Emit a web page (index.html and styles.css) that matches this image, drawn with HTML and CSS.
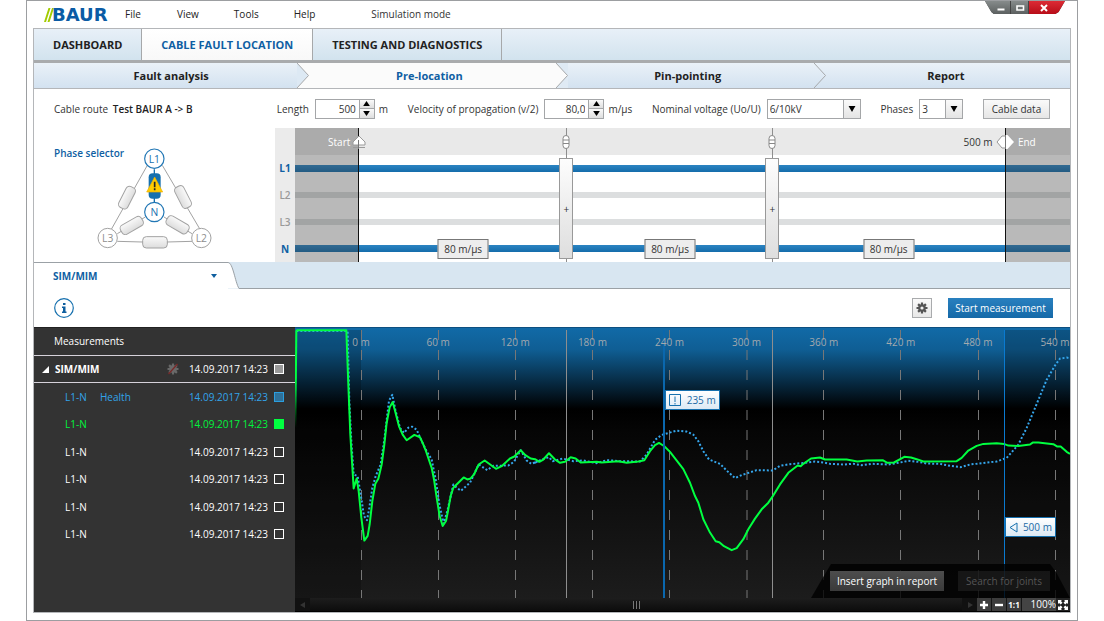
FILE: index.html
```html
<!DOCTYPE html>
<html lang="en">
<head>
<meta charset="utf-8">
<title>BAUR – Cable fault location</title>
<link rel="stylesheet" href="styles.css">
</head>
<body>
<div class="window">
  <header class="titlebar">
    <div class="logo">
      <svg class="logo-stripes" viewBox="0 0 10 14" aria-hidden="true">
        <path d="M0 14 4.500 0h2L2 14zM3.500 14 8 0h2L5.500 14z" fill="#a3cc00"/>
      </svg>
      <span class="logo-name">BAUR</span>
    </div>
    <nav class="menu">
      <button class="menu-item">File</button>
      <button class="menu-item">View</button>
      <button class="menu-item">Tools</button>
      <button class="menu-item">Help</button>
    </nav>
    <span class="mode">Simulation mode</span>
    <div class="window-buttons">
      <button class="win-btn win-min" aria-label="Minimize"><svg viewBox="0 0 10 10"><path d="M1.500 5.500h7v2h-7z" fill="#fff"/></svg></button>
      <button class="win-btn" aria-label="Maximize"><svg viewBox="0 0 10 10"><path d="M2 3h6.500v4H2z" fill="none" stroke="#fff" stroke-width="1.600"/></svg></button>
      <button class="win-btn win-close" aria-label="Close"><svg viewBox="0 0 10 10"><path d="m2 2 6 6M8 2 2 8" stroke="#fff" stroke-width="2"/></svg></button>
    </div>
  </header>

  <main class="frame">
    <nav class="tabs">
      <button class="tab">DASHBOARD</button>
      <button class="tab tab-active">CABLE FAULT LOCATION</button>
      <button class="tab">TESTING AND DIAGNOSTICS</button>
    </nav>

    <nav class="steps">
      <button class="step">Fault analysis
        <svg class="step-arrow" viewBox="0 0 12 25"><path d="M0 0h12v25H0z" fill="#fbfbfb"/><path d="m0 0 11.500 12.500L0 25z" fill="#dde9f4"/><path d="m0 0 11.500 12.500L0 25" fill="none" stroke="#a6a8aa"/></svg>
      </button>
      <button class="step step-active">Pre-location
        <svg class="step-arrow" viewBox="0 0 12 25"><path d="M0 0h12v25H0z" fill="#dfeaf4"/><path d="m0 0 11.500 12.500L0 25z" fill="#fbfbfb"/><path d="m0 0 11.500 12.500L0 25" fill="none" stroke="#a6a8aa"/></svg>
      </button>
      <button class="step">Pin-pointing
        <svg class="step-arrow" viewBox="0 0 12 25"><path d="m0 0 11.500 12.500L0 25" fill="none" stroke="#a6a8aa"/></svg>
      </button>
      <button class="step">Report</button>
    </nav>

    <form class="params">
      <span class="route">Cable route <b class="route-name">Test BAUR A -&gt; B</b></span>
      <div class="field">
        <label for="length">Length</label>
        <span class="spin">
          <input id="length" class="spin-input" type="text" value="500">
          <span class="spin-buttons">
            <button type="button" class="spin-btn" aria-label="Increase length"><svg viewBox="0 0 8 6"><path d="M4 0 8 6H0z"/></svg></button>
            <button type="button" class="spin-btn" aria-label="Decrease length"><svg viewBox="0 0 8 6"><path d="M4 6 8 0H0z"/></svg></button>
          </span>
        </span>
        <span class="unit">m</span>
      </div>
      <div class="field">
        <label for="velocity">Velocity of propagation (v/2)</label>
        <span class="spin">
          <input id="velocity" class="spin-input" type="text" value="80,0">
          <span class="spin-buttons">
            <button type="button" class="spin-btn" aria-label="Increase velocity"><svg viewBox="0 0 8 6"><path d="M4 0 8 6H0z"/></svg></button>
            <button type="button" class="spin-btn" aria-label="Decrease velocity"><svg viewBox="0 0 8 6"><path d="M4 6 8 0H0z"/></svg></button>
          </span>
        </span>
        <span class="unit">m/µs</span>
      </div>
      <div class="field">
        <label for="voltage">Nominal voltage (Uo/U)</label>
        <span class="combo combo-wide">
          <select id="voltage" class="combo-select"><option>6/10kV</option></select>
          <span class="combo-arrow"><svg viewBox="0 0 8 7"><path d="M4 7 8 0H0z"/></svg></span>
        </span>
      </div>
      <div class="field">
        <label for="phases">Phases</label>
        <span class="combo combo-narrow">
          <select id="phases" class="combo-select"><option>3</option></select>
          <span class="combo-arrow"><svg viewBox="0 0 8 7"><path d="M4 7 8 0H0z"/></svg></span>
        </span>
      </div>
      <button type="button" class="data-btn">Cable data</button>
    </form>

    <section class="overview">
      <div class="selector">
        <h2 class="selector-title">Phase selector</h2>
        <svg class="selector-graph" viewBox="225 78 360 312" role="img" aria-label="Phase triangle">
          <defs>
            <linearGradient id="pill" x1="0" y1="0" x2="0" y2="1"><stop offset="0" stop-color="#fafafa"/><stop offset="1" stop-color="#dcdcdc"/></linearGradient>
          </defs>
          <g fill="none" stroke="#a2a2a2" stroke-width="3">
            <path d="M382 136 274 328M427 136 540 328M292 364l112 3 112-3M376 291l-84 50M432 291l84 50"/>
            <g fill="url(#pill)">
              <rect x="286" y="218" width="70" height="30" rx="11" transform="rotate(-63 321 233)"/>
              <rect x="454" y="216" width="70" height="30" rx="11" transform="rotate(63 489 231)"/>
              <rect x="299" y="301" width="72" height="31" rx="11" transform="rotate(-30 335 316)"/>
              <rect x="437" y="299" width="72" height="31" rx="11" transform="rotate(30 473 314)"/>
              <rect x="368" y="350" width="74" height="34" rx="11"/>
            </g>
            <circle cx="263" cy="354" r="29" fill="#fff"/>
            <circle cx="544" cy="354" r="29" fill="#fff"/>
          </g>
          <path d="M403 148v100" stroke="#1670ae" stroke-width="4"/>
          <rect x="386" y="160" width="36" height="76" rx="12" fill="#1670ae"/>
          <path d="m404 171 24 45h-48z" fill="#fc0" stroke="#f0b000" stroke-width="2"/>
          <path d="M404 185v17M404 205v6" stroke="#222" stroke-width="5"/>
          <g fill="#fff" stroke="#2277b5" stroke-width="3.500">
            <circle cx="403" cy="116" r="29"/><circle cx="403" cy="276" r="29"/>
          </g>
          <g class="node-text">
            <text x="403" y="128" fill="#1670ae">L1</text>
            <text x="403" y="288" fill="#1670ae">N</text>
            <text x="263" y="366" fill="#8e8e8e">L3</text>
            <text x="544" y="366" fill="#8e8e8e">L2</text>
          </g>
        </svg>
      </div>

      <div class="cable">
        <ul class="cable-labels">
          <li class="on">L1</li><li>L2</li><li>L3</li><li class="on">N</li>
        </ul>
        <div class="cable-area">
          <div class="cable-head"></div>
          <div class="lane"><i class="wire wire-on"></i></div>
          <div class="lane"><i class="wire"></i></div>
          <div class="lane"><i class="wire"></i></div>
          <div class="lane"><i class="wire wire-on"></i></div>

          <div class="outside outside-start"><span class="outside-text">Start</span></div>
          <div class="outside outside-end"><span class="outside-text">End</span></div>
          <svg class="pin pin-start" viewBox="0 0 14 14"><path d="M7 1 1 7v3h12V7zM1 12.500h12" fill="#fff" stroke="#9a9a9a"/><path d="M6.500 5v9" stroke="#777"/></svg>
          <span class="end-length">500 m</span>
          <svg class="pin pin-end" viewBox="0 0 18 14"><path d="M9 1H6L1 7l5 6h3" fill="#fff" stroke="#999"/><path d="M9.500 0h2L18 7l-6.500 7h-2z" fill="#fff"/><path d="M9.500 0v14" stroke="#777"/></svg>

          <div class="joint joint-a">
            <svg class="joint-icon" viewBox="0 0 8 14"><rect x="1" y=".5" width="6" height="13" rx="3" fill="#fff" stroke="#888"/><path d="M1 5h6M1 8.500h6" stroke="#888"/></svg>
            <span class="joint-bar">+</span>
          </div>
          <div class="joint joint-b">
            <svg class="joint-icon" viewBox="0 0 8 14"><rect x="1" y=".5" width="6" height="13" rx="3" fill="#fff" stroke="#888"/><path d="M1 5h6M1 8.500h6" stroke="#888"/></svg>
            <span class="joint-bar">+</span>
          </div>
          <span class="speed speed-a">80 m/µs</span>
          <span class="speed speed-b">80 m/µs</span>
          <span class="speed speed-c">80 m/µs</span>
        </div>
      </div>
    </section>

    <div class="method-bar">
      <div class="method">
        <select class="method-select" aria-label="Measurement method"><option>SIM/MIM</option></select>
        <svg class="method-caret" viewBox="0 0 6 4"><path d="M0 0h6L3 4z" fill="#0f5f9f"/></svg>
      </div>
      <svg class="method-edge" viewBox="0 0 12 27"><path d="M0 .5C5 .5 7 20 11 26.500H0z" fill="#fff"/><path d="M0 .5C5 .5 7 20 11 26.500h1" fill="none" stroke="#9ba1a6"/></svg>
      <div class="method-rest"></div>
    </div>

    <div class="actions">
      <button class="info" aria-label="Information"><svg viewBox="0 0 20 20"><circle cx="10" cy="10" r="9.300" fill="#fff" stroke="#1670ae" stroke-width="1.200"/><path d="M9 5h2.500v2H9zM8 8.500h3.500v5h1V15H8v-1.500h1V10H8z" fill="#0f5f9f"/></svg></button>
      <button class="gear" aria-label="Settings">
        <svg viewBox="0 0 12 12"><g stroke="#555" stroke-width="2.200"><path d="M6 .5v11M.5 6h11M2.100 2.100l7.800 7.800M9.900 2.100 2.100 9.900"/></g><circle cx="6" cy="6" r="3.800" fill="#555"/><circle cx="6" cy="6" r="1.600" fill="#f0f0f0"/></svg>
      </button>
      <button class="start">Start measurement</button>
    </div>

    <section class="results">
      <aside class="list">
        <h2 class="list-title">Measurements</h2>
        <div class="group">
          <svg class="group-toggle" viewBox="0 0 7 7"><path d="M7 0v7H0z" fill="#fff"/></svg>
          <b class="group-name">SIM/MIM</b>
          <svg class="group-gear" viewBox="0 0 12 12"><g stroke="#777" stroke-width="2.200"><path d="M6 .5v11M.5 6h11M2.100 2.100l7.800 7.800M9.900 2.100 2.100 9.900"/></g><circle cx="6" cy="6" r="3.800" fill="#777"/><path d="M10.500 1 1.500 11" stroke="#8a2626" stroke-width="1.300"/></svg>
          <label class="date" for="m0">14.09.2017 14:23</label>
          <input id="m0" class="mark mark-mixed" type="checkbox">
        </div>
        <ul class="rows">
          <li class="row row-blue"><span>L1-N</span><span>Health</span><label class="date" for="m1">14.09.2017 14:23</label><input id="m1" class="mark mark-blue" type="checkbox" checked></li>
          <li class="row row-green"><span>L1-N</span><span></span><label class="date" for="m2">14.09.2017 14:23</label><input id="m2" class="mark mark-green" type="checkbox" checked></li>
          <li class="row"><span>L1-N</span><span></span><label class="date" for="m3">14.09.2017 14:23</label><input id="m3" class="mark" type="checkbox"></li>
          <li class="row"><span>L1-N</span><span></span><label class="date" for="m4">14.09.2017 14:23</label><input id="m4" class="mark" type="checkbox"></li>
          <li class="row"><span>L1-N</span><span></span><label class="date" for="m5">14.09.2017 14:23</label><input id="m5" class="mark" type="checkbox"></li>
          <li class="row"><span>L1-N</span><span></span><label class="date" for="m6">14.09.2017 14:23</label><input id="m6" class="mark" type="checkbox"></li>
        </ul>
      </aside>

      <div class="graph">
        <div class="plot">
          <svg class="curves" viewBox="0 0 775 271" preserveAspectRatio="none" role="img" aria-label="Pulse reflection over distance">
            <defs>
              <linearGradient id="rise" gradientUnits="userSpaceOnUse" x1="0" y1="16" x2="0" y2="310"><stop offset="0" stop-color="#00ff40"/><stop offset=".5" stop-color="#00ff40"/><stop offset="1" stop-color="#00ff40" stop-opacity="0"/></linearGradient>
            </defs>
            <path d="M0 2h66v269H0zM710 2h65v269h-65z" fill="#000" fill-opacity=".2"/>
            <path class="grid" d="M66.500 2v269M143.500 2v269M220.500 2v269M297.500 2v269M374.500 2v269M452 2v269M528.500 2v269M605.500 2v269M683.500 2v269M760.500 2v269"/>
            <path class="joint-line" d="M271.500 2v269M477.500 2v269"/>
            <g transform="translate(-5 -3) scale(.33333)">
              <polyline class="curve curve-health" points="19,18 173,18 178,230 184,350 191,450 203,455 212,510 222,575 231,588 238,550 247,490 257,455 272,420 283,345 297,228 307,210 316,255 330,310 342,325 355,309 366,306 380,315 395,350 410,380 425,405 438,470 448,540 461,598 472,560 490,480 500,490 513,499 540,475 552,450 566,420 592,437 610,424 655,423 672,412 692,377 710,408 724,418 745,410 732,416 755,405 777,398 788,410 818,402 850,410 880,408 900,412 920,416 950,407 970,408 985,410 1050,411 1070,390 1095,346 1115,331 1160,318 1190,321 1210,330 1225,350 1240,380 1257,405 1290,418 1312,440 1335,461 1355,452 1400,437 1448,438 1470,424 1500,419 1535,416 1575,411 1600,414 1620,418 1660,420 1690,418 1715,422 1745,418 1795,420 1830,414 1855,409 1885,412 1910,417 1950,418 1980,424 2013,428 2040,420 2120,411 2150,400 2185,360 2210,310 2235,250 2270,165 2295,122 2310,101 2330,98 2340,100"/>
              <polyline class="curve curve-rise" points="16,310 19,16"/>
              <polyline class="curve curve-fault" points="19,16 169,16 175,180 181,330 191,492 200,462 206,500 214,580 223,649 233,635 239,600 247,530 256,478 265,463 275,420 283,360 290,295 299,248 308,232 316,262 327,305 338,330 350,347 373,331 390,338 398,355 408,380 425,430 432,465 440,520 449,575 458,605 468,590 474,560 482,515 490,490 521,459 532,465 542,462 552,450 566,420 584,408 618,433 635,425 660,402 673,396 692,377 706,392 722,402 735,404 748,412 760,405 777,386 795,405 810,415 825,412 842,398 857,402 872,414 920,412 935,414 985,410 1010,415 1045,411 1063,407 1080,380 1095,362 1107,355 1123,365 1140,382 1180,434 1200,475 1215,515 1225,535 1240,585 1260,625 1277,651 1288,654 1302,666 1325,678 1340,672 1360,645 1375,615 1395,583 1415,555 1435,535 1448,516 1470,480 1495,445 1523,423 1532,425 1540,418 1563,402 1590,399 1605,405 1670,405 1702,411 1730,408 1778,407 1792,415 1812,414 1843,397 1863,399 1880,404 1900,411 2000,410 2015,400 2035,378 2060,364 2080,358 2120,356 2142,358 2155,363 2185,364 2220,360 2228,354 2245,354 2290,359 2302,366 2312,366 2330,382 2340,388"/>
            </g>
            <path class="cursor" d="M369 2v269"/>
            <path class="cursor cursor-thin" d="M709.500 2v269"/>
          </svg>
          <ol class="scale">
            <li>0 m</li><li>60 m</li><li>120 m</li><li>180 m</li><li>240 m</li><li>300 m</li><li>360 m</li><li>420 m</li><li>480 m</li><li>540 m</li>
          </ol>
          <div class="flag flag-fault"><svg class="flag-icon" viewBox="0 0 12 12"><path d="M.5.5h11v11H.5z" fill="none" stroke="#1670ae"/><path d="M6 2.500V8M6 9v1.500" stroke="#1670ae"/></svg>235 m</div>
          <div class="flag flag-end"><svg class="flag-arrow" viewBox="0 0 9 11"><path d="M8 1v9L1 5.500z" fill="none" stroke="#1670ae"/></svg>500 m</div>
          <div class="dock">
            <button class="dock-btn">Insert graph in report</button>
            <button class="dock-btn dock-off" disabled>Search for joints</button>
          </div>
        </div>
        <div class="scrollbar">
          <button class="scroll-btn" aria-label="Scroll left"><svg viewBox="0 0 6 6"><path d="M5 0v6L0 3z" fill="#333"/></svg></button>
          <div class="track"><i class="grip"></i></div>
          <button class="scroll-btn" aria-label="Scroll right"><svg viewBox="0 0 6 6"><path d="M1 0v6l5-3z" fill="#333"/></svg></button>
          <button class="zoom-btn" aria-label="Zoom in"><svg viewBox="0 0 8 8"><path d="M4 0v8M0 4h8" stroke="#fff" stroke-width="2.400"/></svg></button>
          <button class="zoom-btn" aria-label="Zoom out"><svg viewBox="0 0 8 8"><path d="M0 4h8" stroke="#fff" stroke-width="2.400"/></svg></button>
          <button class="zoom-btn zoom-one">1:1</button>
          <span class="zoom-value">100%</span>
          <button class="zoom-fit" aria-label="Fit to window"><svg viewBox="0 0 10 10"><path d="M0 0h4L2.900 1.100l1.600 1.600-1.800 1.800-1.600-1.600L0 4zM10 0v4L8.900 2.900 7.300 4.500 5.500 2.700l1.600-1.600L6 0zM0 10V6l1.100 1.100 1.600-1.600 1.800 1.800-1.600 1.600L4 10zM10 10H6l1.100-1.100-1.600-1.600 1.800-1.800 1.600 1.600L10 6z" fill="#fff"/></svg></button>
        </div>
      </div>
    </section>
  </main>
</div>
</body>
</html>
```

FILE: styles.css
```css
* { box-sizing: border-box; }

body {
  margin: 0;
  background: #fff;
  color: #333;
  font: 10px/14px "Open Sans", "Noto Sans", sans-serif;
}

button, input, select {
  margin: 0;
  padding: 0;
  border: 0;
  border-radius: 0;
  background: none;
  color: inherit;
  font: inherit;
}

svg { display: block; }
ul, ol { margin: 0; padding: 0; list-style: none; }
h2 { margin: 0; font-size: inherit; }

.window {
  display: flex;
  flex-direction: column;
  min-height: 100vh;
  margin: 0 26px;
  padding: 0 6px 7px;
  border: 1px solid #9c9ea1;
}

/* Title bar */
.titlebar {
  display: flex;
  align-items: flex-start;
  height: 27px;
  padding: 0 6px 0 11px;
}
.logo { display: flex; align-items: center; width: 80px; height: 27px; }
.logo-stripes { flex: none; width: 10px; height: 14px; margin-right: -2px; }
.logo-name { color: #0a5ba5; font: bold 18px/27px "DejaVu Sans", sans-serif; }
.menu { display: flex; gap: 35px; line-height: 27px; color: #222; }
.menu-item { min-width: 18px; }
.mode { margin-left: 56px; line-height: 27px; }
.window-buttons {
  display: flex;
  gap: 1px;
  width: 80px;
  height: 13px;
  margin-left: auto;
  background: #444;
  clip-path: polygon(0 0, 100% 0, 92% 85%, 88% 100%, 11% 100%, 8% 85%);
}
.win-btn {
  display: flex;
  align-items: center;
  justify-content: center;
  width: 17px;
  background: linear-gradient(#868b8b, #5c6060);
}
.win-btn svg { width: 10px; height: 10px; }
.win-min { width: 25px; padding-left: 6px; }
.win-close { width: 36px; padding-right: 6px; background: linear-gradient(#dc2b35, #b80d18); }

.frame {
  display: flex;
  flex: 1;
  flex-direction: column;
  overflow: hidden;
  border: 1px solid #b4b6b9;
}

/* Main tabs */
.tabs {
  display: flex;
  height: 34px;
  border-bottom: 3px solid #a9abad;
  background: linear-gradient(#e8f0f8, #d2e3ee);
}
.tab {
  padding: 0 19px;
  border-right: 1px solid #a6a8aa;
  color: #222;
  font-size: 11px;
  font-weight: bold;
}
.tab-active { background: linear-gradient(#fff, #f8f8f8); color: #0f5fa3; }

/* Workflow steps */
.steps {
  display: grid;
  grid-template-columns: repeat(4, 1fr);
  height: 26px;
  margin-right: -5px;
  padding-left: 8px;
  overflow: hidden;
  border-bottom: 1px solid #b4b6b9;
  background: linear-gradient(#eaf1f8, #d3e2f0);
}
.step { position: relative; color: #222; font-size: 11px; font-weight: bold; }
.step-active { background: #fbfbfb; color: #0f5fa3; }
.step-arrow { position: absolute; z-index: 1; top: 0; right: -9px; width: 12px; height: 25px; }

/* Cable parameters */
.params {
  display: flex;
  align-items: center;
  justify-content: space-between;
  height: 39px;
  padding: 0 20px;
}
.route { width: 203px; }
.route-name { margin-left: 2px; color: #222; font-weight: 600; }
.field { display: flex; align-items: center; gap: 6px; }
.unit { margin-left: -2px; }
.spin, .combo { display: flex; height: 20px; border: 1px solid #a4a6a8; background: #fff; }
.spin { width: 60px; }
.spin-input { flex: 1; width: 20px; padding-right: 3px; text-align: right; }
.spin-buttons { display: grid; width: 15px; border-left: 1px solid #a4a6a8; }
.spin-btn { display: grid; place-items: center; background: linear-gradient(#fafafa, #dedede); }
.spin-btn + .spin-btn { border-top: 1px solid #a4a6a8; }
.spin-btn svg { width: 7px; height: 5px; }
.combo { position: relative; }
.combo-wide { width: 94px; }
.combo-narrow { width: 44px; }
.combo-select { flex: 1; width: 100%; padding-left: 2px; appearance: none; }
.combo-arrow {
  position: absolute;
  top: 0;
  right: 0;
  bottom: 0;
  display: grid;
  place-items: center;
  width: 17px;
  border-left: 1px solid #a4a6a8;
  background: linear-gradient(#fafafa, #e4e4e4);
  pointer-events: none;
}
.combo-arrow svg { width: 8px; height: 6px; }
.data-btn {
  width: 67px;
  height: 20px;
  border: 1px solid #a9abad;
  background: linear-gradient(#fafafa, #e6e6e6);
}

/* Phase selector and cable overview */
.overview { display: grid; grid-template-columns: 241px 1fr; height: 134px; }
.selector { display: grid; }
.selector-title { grid-area: 1 / 1; margin: 18px 0 0 20px; color: #0f5fa3; font-weight: 600; }
.selector-graph { grid-area: 1 / 1; width: 120px; height: 104px; margin: 18px 0 0 61px; }
.node-text { font-size: 31px; text-anchor: middle; }

.cable { display: grid; grid-template-columns: 20px 1fr; }
.cable-labels {
  display: grid;
  grid-template-rows: repeat(4, 1fr);
  align-items: center;
  padding-top: 27px;
  background: #ebebeb;
  color: #999;
  font-weight: 600;
  text-align: center;
}
.cable-labels .on { color: #0f5fa3; font-weight: bold; }
.cable-area { position: relative; display: grid; grid-template-rows: 27px repeat(4, 1fr); overflow: hidden; }
.cable-head { background: #e9e9e9; }
.lane { display: grid; align-items: center; }
.wire { height: 6px; background: #dcdedf; }
.wire-on { height: 7px; background: linear-gradient(#2b84c2, #156cab); }
.outside { position: absolute; top: 0; bottom: 0; background: rgba(60, 60, 60, .36); color: #fff; line-height: 29px; }
.outside-start { left: 0; width: 8.300%; border-right: 1px solid #111; }
.outside-end { left: 91.600%; right: 0; border-left: 1px solid #111; }
.outside-start .outside-text { float: right; margin-right: 8px; }
.outside-end .outside-text { margin-left: 12px; }
.pin { position: absolute; top: 7px; height: 14px; transform: translateX(-50%); }
.pin-start { left: 8.300%; width: 14px; }
.pin-end { left: 91.600%; width: 18px; }
.end-length { position: absolute; top: 0; right: 10%; line-height: 29px; }
.joint {
  position: absolute;
  top: 0;
  bottom: 0;
  display: flex;
  flex-direction: column;
  align-items: center;
  gap: 9px;
  width: 14px;
  padding: 7px 0 3px;
  background: linear-gradient(#8e8e8e, #8e8e8e) center / 1px 100% no-repeat;
  transform: translateX(-50%);
}
.joint-a { left: 35%; }
.joint-b { left: 61.600%; }
.joint-icon { width: 8px; height: 14px; }
.joint-bar {
  display: grid;
  flex: 1;
  place-items: center;
  width: 14px;
  border: 1px solid #999;
  background: linear-gradient(#fdfdfd, #dedede);
}
.speed {
  position: absolute;
  bottom: 3px;
  width: 51px;
  height: 20px;
  border: 1px solid #777;
  background: #ededed;
  line-height: 18px;
  text-align: center;
  transform: translateX(-50%);
}
.speed-a { left: 21.700%; }
.speed-b { left: 48.400%; }
.speed-c { left: 76.600%; }

/* Method tab */
.method-bar { display: flex; height: 27px; background: #d8e6f1; }
.method { position: relative; display: flex; width: 194px; border-top: 1px solid #9ba1a6; background: #fff; }
.method-select { flex: 1; padding-left: 19px; appearance: none; color: #0f5fa3; font-weight: bold; }
.method-caret { position: absolute; top: 11px; right: 11px; width: 6px; height: 4px; pointer-events: none; }
.method-edge { width: 12px; height: 27px; }
.method-rest { flex: 1; border-bottom: 1px solid #9ba1a6; }

.actions { display: flex; align-items: center; height: 38px; padding: 0 17px 0 20px; }
.info svg { width: 20px; height: 20px; }
.gear {
  display: grid;
  place-items: center;
  width: 20px;
  height: 20px;
  margin: 0 16px 0 auto;
  border: 1px solid #a9abad;
  background: linear-gradient(#fafafa, #e8e8e8);
}
.gear svg { width: 12px; height: 12px; }
.start { width: 105px; height: 20px; background: linear-gradient(#2980bf, #1569a8); color: #fff; }

/* Results */
.results { display: grid; flex: 1; grid-template-columns: 261px 1fr; min-height: 285px; }
.list { border-top: 1px solid #222; background: #333; color: #fff; }
.list-title { height: 27px; padding-left: 20px; line-height: 27px; font-weight: normal; }
.group {
  display: flex;
  align-items: center;
  height: 28px;
  padding: 0 11px 0 8px;
  border: solid #d6d2da;
  border-width: 1px 0;
}
.group-toggle { width: 7px; height: 7px; margin-right: 6px; }
.group-gear { width: 12px; height: 12px; margin-left: auto; opacity: .8; }
.date { margin: 0 6px 0 10px; white-space: nowrap; }
.rows { display: grid; grid-template-rows: repeat(6, 1fr); height: 165px; }
.row { display: grid; grid-template-columns: 35px 1fr auto auto; align-items: center; padding: 0 11px 0 31px; }
.row-blue { color: #32a4ea; }
.row-green { color: #00f53d; }
.mark { width: 10px; height: 10px; border: 1px solid #fff; appearance: none; }
.mark-mixed { background: #999; }
.mark-blue { border-color: #2b9fe0; background: #2f7199; }
.mark-green { border-color: #00ff40; background: #00ff40; }

.graph { display: flex; flex-direction: column; min-width: 0; }
.plot {
  position: relative;
  flex: 1;
  min-height: 271px;
  overflow: hidden;
  border-top: 1px solid #0d4f80;
  background: linear-gradient(#116aa7 0, #0f5e94 8%, #000 30%, #050505 38%, #1c1c1c 100%);
}
.curves { position: absolute; inset: 0; width: 100%; height: 100%; }
.curves path, .curve { vector-effect: non-scaling-stroke; }
.grid { stroke: #777; stroke-dasharray: 10 10; }
.joint-line { stroke: #8e8e8e; }
.curve { fill: none; stroke-linejoin: round; }
.curve-health { stroke: #35a6ec; stroke-width: 2; stroke-dasharray: 2 2; }
.curve-fault { stroke: #00ff40; stroke-width: 2; }
.curve-rise { stroke: url(#rise); stroke-width: 2; }
.cursor { stroke: #0a67ad; stroke-width: 2; }
.cursor-thin { stroke: #0a7ad0; stroke-width: 1; }
.scale {
  position: absolute;
  top: 7px;
  left: 3.550%;
  display: grid;
  grid-template-columns: repeat(10, 1fr);
  width: 99.500%;
  color: #a3a9ae;
  text-align: center;
}
.flag {
  position: absolute;
  display: flex;
  align-items: center;
  height: 20px;
  border: 1px solid #1670ae;
  background: linear-gradient(#fff, #dce9f4);
  color: #1b6ba5;
}
.flag-fault { top: 62px; left: 47.700%; gap: 6px; padding: 0 3px; }
.flag-end { top: 189px; left: 91.600%; gap: 5px; padding: 0 3px; }
.flag-icon { width: 12px; height: 12px; }
.flag-arrow { width: 9px; height: 11px; }
.dock {
  position: absolute;
  right: 0;
  bottom: 0;
  display: flex;
  gap: 14px;
  height: 34px;
  padding: 7px 20px 0 19px;
  background: rgba(0, 0, 0, .8);
  clip-path: polygon(0 100%, 14px 10px, 20px 0, calc(100% - 20px) 0, calc(100% - 14px) 8px, 100% 100%);
}
.dock-btn { width: 114px; height: 20px; background: linear-gradient(#4d4d4d, #3a3a3a); color: #fff; white-space: nowrap; }
.dock-off { width: 92px; background: rgba(40, 40, 40, .5); color: #555; }

.scrollbar { display: flex; height: 14px; border-bottom: 1px solid #000; background: #161616; color: #fff; }
.scroll-btn { display: grid; place-items: center; width: 15px; background: #111; }
.scroll-btn svg { width: 6px; height: 6px; }
.track { display: grid; flex: 1; place-items: center; background: linear-gradient(#1d1d1d, #0c0c0c); }
.grip { width: 7px; height: 8px; background: repeating-linear-gradient(90deg, #777 0 1px, #111 1px 3px); }
.zoom-btn { display: grid; place-items: center; width: 14px; margin-right: 1px; background: #3c3c3c; line-height: 13px; }
.zoom-btn svg { width: 8px; height: 8px; }
.zoom-one { font-size: 8px; font-weight: bold; }
.zoom-value { width: 34px; background: #444; line-height: 13px; text-align: right; }
.zoom-fit { display: grid; place-items: center; width: 14px; background: #222; }
.zoom-fit svg { width: 10px; height: 10px; }
```
